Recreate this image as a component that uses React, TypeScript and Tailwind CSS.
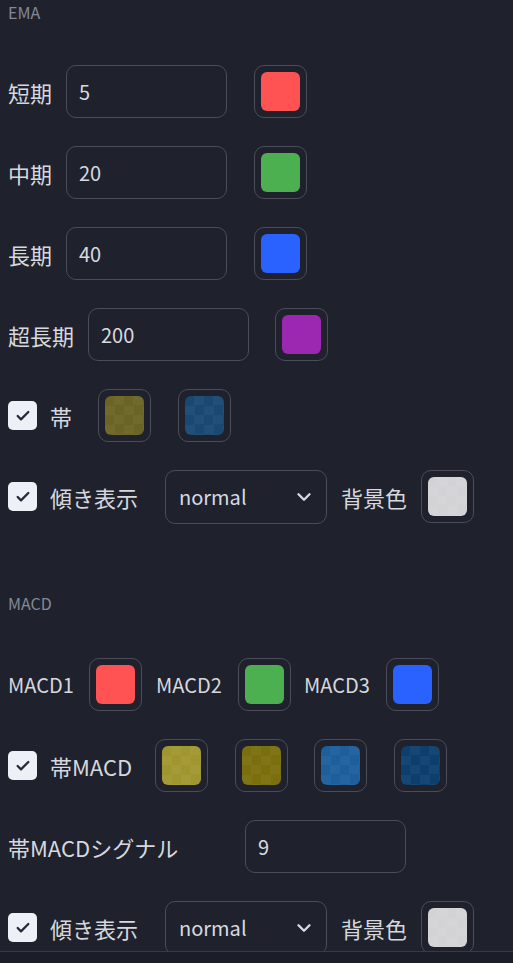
import { Check, ChevronDown } from "lucide-react";

const font = { fontFamily: '"Noto Sans CJK JP", "Noto Sans", sans-serif' };

function Swatch({ color, alpha = false, className = "" }: { color: string; alpha?: boolean; className?: string }) {
  return (
    <div className={`flex h-[53px] w-[53px] shrink-0 items-center justify-center rounded-[10px] border border-[#4a4d59] ${className}`}>
      <div
        className={`h-[39px] w-[39px] rounded-[6px] ${alpha ? "bg-[conic-gradient(rgba(255,255,255,0.04)_25%,transparent_0_50%,rgba(255,255,255,0.04)_0_75%,transparent_0)] bg-[length:19px_19px]" : ""}`}
        style={{ backgroundColor: color }}
      />
    </div>
  );
}

function NumInput({ value, className = "" }: { value: string; className?: string }) {
  return (
    <div className={`flex h-[53px] w-[161px] shrink-0 items-center rounded-[10px] border border-[#4a4d59] px-[12px] text-[20px] text-[#d8dae0] ${className}`}>
      {value}
    </div>
  );
}

function Checkbox() {
  return (
    <div className="flex h-[29px] w-[29px] shrink-0 items-center justify-center rounded-[5px] bg-[#eef0f8] text-[#262936]">
      <Check size={16} strokeWidth={3.4} />
    </div>
  );
}

function SelectBox({ className = "" }: { className?: string }) {
  return (
    <div className={`flex h-[54px] w-[162px] shrink-0 items-center justify-between rounded-[10px] border border-[#4a4d59] pl-[13px] pr-[11px] text-[20px] text-[#d8dae0] ${className}`}>
      <span>normal</span>
      <ChevronDown size={22} strokeWidth={2.6} />
    </div>
  );
}

function SectionTitle({ children }: { children: string }) {
  return <div className="h-[24px] text-[16px] leading-[24px] text-[#868995]">{children}</div>;
}

function Label({ children, className = "" }: { children: string; className?: string }) {
  return <span className={`shrink-0 whitespace-nowrap leading-none text-[#d6d8de] ${className || ""} ${className.includes("text-[") ? "" : "text-[22px]"}`}>{children}</span>;
}

function SlopeRow() {
  return (
    <div className="flex h-[53px] items-center">
      <Checkbox />
      <Label className="ml-[13px]">傾き表示</Label>
      <SelectBox className="ml-[27px]" />
      <Label className="ml-[14px] w-[67px]">背景色</Label>
      <Swatch color="#d3d3d5" alpha className="ml-[13px]" />
    </div>
  );
}

export default function App() {
  return (
    <div className="flex min-h-[963px] flex-col bg-[#1f222d]" style={font}>
      <div className="h-[951px] shrink-0 overflow-hidden px-[8px]">
        <SectionTitle>EMA</SectionTitle>
        <div className="mt-[41px] flex flex-col gap-[28px]">
          <div className="flex h-[53px] items-center">
            <Label>短期</Label>
            <NumInput value="5" className="ml-[14px]" />
            <Swatch color="#ff5252" className="ml-[27px]" />
          </div>
          <div className="flex h-[53px] items-center">
            <Label>中期</Label>
            <NumInput value="20" className="ml-[14px]" />
            <Swatch color="#4caf50" className="ml-[27px]" />
          </div>
          <div className="flex h-[53px] items-center">
            <Label>長期</Label>
            <NumInput value="40" className="ml-[14px]" />
            <Swatch color="#2962ff" className="ml-[27px]" />
          </div>
          <div className="flex h-[53px] items-center">
            <Label>超長期</Label>
            <NumInput value="200" className="ml-[14px]" />
            <Swatch color="#9c27b0" className="ml-[26px]" />
          </div>
          <div className="flex h-[53px] items-center">
            <Checkbox />
            <Label className="ml-[13px]">帯</Label>
            <Swatch color="#6b6424" alpha className="ml-[26px]" />
            <Swatch color="#194872" alpha className="ml-[27px]" />
          </div>
          <SlopeRow />
        </div>

        <div className="mt-[68px]">
          <SectionTitle>MACD</SectionTitle>
        </div>
        <div className="mt-[43px] flex flex-col gap-[28px]">
          <div className="flex h-[53px] items-center">
            <Label className="w-[66px] text-[20px]">MACD1</Label>
            <Swatch color="#ff5252" className="ml-[15px]" />
            <Label className="ml-[14px] w-[68px] text-[20px]">MACD2</Label>
            <Swatch color="#4caf50" className="ml-[14px]" />
            <Label className="ml-[13px] w-[68px] text-[20px]">MACD3</Label>
            <Swatch color="#2962ff" className="ml-[14px]" />
          </div>
          <div className="flex h-[53px] items-center">
            <Checkbox />
            <Label className="ml-[13px] w-[78px]">帯MACD</Label>
            <Swatch color="#a0962f" alpha className="ml-[27px]" />
            <Swatch color="#7a6f0c" alpha className="ml-[27px]" />
            <Swatch color="#1c5f9b" alpha className="ml-[26px]" />
            <Swatch color="#0c3f6e" alpha className="ml-[27px]" />
          </div>
          <div className="flex h-[53px] items-center">
            <Label>帯MACDシグナル</Label>
            <NumInput value="9" className="ml-auto mr-[99px]" />
          </div>
          <SlopeRow />
        </div>
      </div>
      <div className="flex-1 border-t border-[#363a46] bg-[#1b1e28]" />
    </div>
  );
}
